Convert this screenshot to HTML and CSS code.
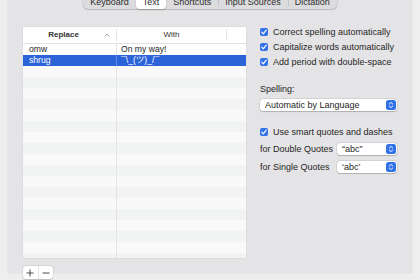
FILE: index.html
```html
<!DOCTYPE html>
<html>
<head>
<meta charset="utf-8">
<link rel="stylesheet" href="styles.css">
</head>
<body>
<div class="panel">
  <div class="tabs">
    <div class="tab">Keyboard</div>
    <div class="tab selected">Text</div>
    <div class="tab">Shortcuts</div>
    <div class="tab sep">Input Sources</div>
    <div class="tab sep">Dictation</div>
  </div>
  <div class="content">
    <div class="left">
      <div class="table">
        <div class="row header">
          <div class="cell hcell"><span class="htext bold">Replace</span><svg class="caret" width="6" height="4" viewBox="0 0 6 4"><path d="M0.8 3.3 L3 1 L5.2 3.3" fill="none" stroke="#9a9a9a" stroke-width="0.9"/></svg></div>
          <div class="cell hcell"><span class="htext">With</span></div>
          <div class="cell last"></div>
        </div>
        <div class="row data even"><div class="cell c1">omw</div><div class="cell c2">On my way!</div><div class="cell last"></div></div>
        <div class="row data sel"><div class="cell c1">shrug</div><div class="cell c2">¯\_(ツ)_/¯</div><div class="cell last"></div></div>
        <div class="row empty"><div class="cell"></div><div class="cell"></div><div class="cell last"></div></div>
        <div class="row empty odd"><div class="cell"></div><div class="cell"></div><div class="cell last"></div></div>
        <div class="row empty"><div class="cell"></div><div class="cell"></div><div class="cell last"></div></div>
        <div class="row empty odd"><div class="cell"></div><div class="cell"></div><div class="cell last"></div></div>
        <div class="row empty"><div class="cell"></div><div class="cell"></div><div class="cell last"></div></div>
        <div class="row empty odd"><div class="cell"></div><div class="cell"></div><div class="cell last"></div></div>
        <div class="row empty"><div class="cell"></div><div class="cell"></div><div class="cell last"></div></div>
        <div class="row empty odd"><div class="cell"></div><div class="cell"></div><div class="cell last"></div></div>
        <div class="row empty"><div class="cell"></div><div class="cell"></div><div class="cell last"></div></div>
        <div class="row empty odd"><div class="cell"></div><div class="cell"></div><div class="cell last"></div></div>
        <div class="row empty"><div class="cell"></div><div class="cell"></div><div class="cell last"></div></div>
        <div class="row empty odd"><div class="cell"></div><div class="cell"></div><div class="cell last"></div></div>
        <div class="row empty"><div class="cell"></div><div class="cell"></div><div class="cell last"></div></div>
        <div class="row empty odd"><div class="cell"></div><div class="cell"></div><div class="cell last"></div></div>
        <div class="row empty"><div class="cell"></div><div class="cell"></div><div class="cell last"></div></div>
        <div class="row empty odd"><div class="cell"></div><div class="cell"></div><div class="cell last"></div></div>
        <div class="row empty"><div class="cell"></div><div class="cell"></div><div class="cell last"></div></div>
        <div class="row empty odd"><div class="cell"></div><div class="cell"></div><div class="cell last"></div></div>
      </div>
      <div class="pm">
        <div class="pmbtn">
          <svg width="8" height="8" viewBox="0 0 8 8"><path d="M4 0.5 V7.5 M0.5 4 H7.5" stroke="#4a4a4a" stroke-width="1"/></svg>
        </div>
        <div class="pmbtn">
          <svg width="8" height="8" viewBox="0 0 8 8"><path d="M0.5 4 H7.5" stroke="#4a4a4a" stroke-width="1"/></svg>
        </div>
      </div>
    </div>
    <div class="right">
      <div class="check"><span class="box"><svg width="8" height="8" viewBox="0 0 8 8"><path d="M1.8 4.2 L3.3 5.8 L6.2 2.2" fill="none" stroke="#fff" stroke-width="1.2" stroke-linecap="round" stroke-linejoin="round"/></svg></span>Correct spelling automatically</div>
      <div class="check"><span class="box"><svg width="8" height="8" viewBox="0 0 8 8"><path d="M1.8 4.2 L3.3 5.8 L6.2 2.2" fill="none" stroke="#fff" stroke-width="1.2" stroke-linecap="round" stroke-linejoin="round"/></svg></span>Capitalize words automatically</div>
      <div class="check"><span class="box"><svg width="8" height="8" viewBox="0 0 8 8"><path d="M1.8 4.2 L3.3 5.8 L6.2 2.2" fill="none" stroke="#fff" stroke-width="1.2" stroke-linecap="round" stroke-linejoin="round"/></svg></span>Add period with double-space</div>
      <div class="label">Spelling:</div>
      <div class="popup wide"><span class="ptext">Automatic by Language</span><span class="stepper"><svg width="10" height="10" viewBox="0 0 10 10"><path d="M3.3 4 L5 2.4 L6.7 4 M3.3 6 L5 7.6 L6.7 6" fill="none" stroke="#fff" stroke-width="0.9" stroke-linecap="round" stroke-linejoin="round"/></svg></span></div>
      <div class="check smart"><span class="box"><svg width="8" height="8" viewBox="0 0 8 8"><path d="M1.8 4.2 L3.3 5.8 L6.2 2.2" fill="none" stroke="#fff" stroke-width="1.2" stroke-linecap="round" stroke-linejoin="round"/></svg></span>Use smart quotes and dashes</div>
      <div class="qrow first"><span>for Double Quotes</span><div class="popup small"><span class="ptext">“abc”</span><span class="stepper"><svg width="10" height="10" viewBox="0 0 10 10"><path d="M3.3 4 L5 2.4 L6.7 4 M3.3 6 L5 7.6 L6.7 6" fill="none" stroke="#fff" stroke-width="0.9" stroke-linecap="round" stroke-linejoin="round"/></svg></span></div></div>
      <div class="qrow second"><span>for Single Quotes</span><div class="popup small"><span class="ptext">‘abc’</span><span class="stepper"><svg width="10" height="10" viewBox="0 0 10 10"><path d="M3.3 4 L5 2.4 L6.7 4 M3.3 6 L5 7.6 L6.7 6" fill="none" stroke="#fff" stroke-width="0.9" stroke-linecap="round" stroke-linejoin="round"/></svg></span></div></div>
    </div>
  </div>
</div>
</body>
</html>
```

FILE: styles.css
```css
html, body {
  margin: 0;
  padding: 0;
}
body {
  width: 420px;
  height: 280px;
  overflow: hidden;
  background: #efeeef;
  font-family: "Liberation Sans", "Noto Sans CJK JP", sans-serif;
  font-size: 9px;
  color: #262626;
}
.panel {
  margin: 2px 8px 0;
  height: 278px;
  box-sizing: border-box;
  background: #e4e3e5;
  border-radius: 5px 5px 0 0;
  box-shadow: 0 0 0 0.5px rgba(0,0,0,0.05);
  padding: 0 15px;
}
.tabs {
  display: flex;
  width: max-content;
  margin: -7px auto 0;
  height: 14px;
  background: #dcdbdd;
  border-radius: 5px;
  box-shadow: 0 0 0 0.5px rgba(0,0,0,0.14), 0 0.5px 1px rgba(0,0,0,0.12);
}
.tab {
  padding: 0 7px;
  line-height: 15px;
  height: 14px;
  color: #2e2e2e;
  position: relative;
}
.tab.sep::before {
  content: "";
  position: absolute;
  left: 0;
  top: 3px;
  bottom: 3px;
  width: 1px;
  background: #c6c5c7;
}
.tab.selected {
  background: #ffffff;
  border-radius: 4px;
  box-shadow: 0 0.5px 1.5px rgba(0,0,0,0.2);
}
.content {
  display: flex;
  gap: 14px;
  margin-top: 15px;
}
.left {
  width: 223px;
}
.table {
  margin-top: 3px;
  height: 231px;
  overflow: hidden;
  background: #f9f9f9;
  box-shadow: 0 0 0 0.5px rgba(0,0,0,0.06);
}
.row {
  display: grid;
  grid-template-columns: 94px 110px 1fr;
  height: 11px;
}
.cell {
  line-height: 11px;
  white-space: nowrap;
  overflow: hidden;
  font-size: 8.6px;
}
.cell:first-child {
  border-right: 1px solid #e4e4e4;
}
.row.header {
  height: 17px;
  background: #ffffff;
  border-bottom: 1px solid #e2e2e2;
  box-sizing: border-box;
}
.hcell {
  display: flex;
  align-items: center;
  line-height: 16px;
  margin: 2px 0;
}
.header .hcell {
  border-right: 1px solid #e6e6e6;
}
.hcell .htext {
  flex: 1;
  text-align: center;
  font-size: 8px;
  color: #333;
  line-height: 12px;
}
.htext.bold {
  font-weight: bold;
}
.caret {
  margin-right: 6px;
}
.row.data {
  background: #ffffff;
}
.c1 {
  padding-left: 6px;
}
.c2 {
  padding-left: 4px;
}
.row.sel {
  background: #2d63d9;
  color: #ffffff;
}
.row.sel .cell:first-child {
  border-right-color: rgba(255,255,255,0.25);
}
.row.empty {
  background: #f9f9f9;
}
.row.empty.odd {
  background: #f2f3f3;
}
.pm {
  display: flex;
  width: 30px;
  height: 13px;
  margin-top: 8px;
  background: #ffffff;
  border-radius: 3px;
  box-shadow: 0 0 0 0.5px rgba(0,0,0,0.12), 0 0.5px 1px rgba(0,0,0,0.15);
}
.pmbtn {
  flex: 1;
  display: flex;
  align-items: center;
  justify-content: center;
}
.pmbtn + .pmbtn {
  border-left: 1px solid #e2e2e2;
}
.right {
  width: 137px;
  display: flex;
  flex-direction: column;
}
.check {
  display: flex;
  align-items: center;
  gap: 5px;
  height: 15px;
  white-space: nowrap;
}
.box {
  width: 8px;
  height: 8px;
  border-radius: 2px;
  background: #3272e8;
  display: flex;
  flex-shrink: 0;
}
.label {
  margin-top: 14px;
  line-height: 12px;
}
.popup {
  display: flex;
  align-items: center;
  height: 12px;
  background: #ffffff;
  border-radius: 3px;
  box-shadow: 0 0 0 0.5px rgba(0,0,0,0.12), 0 0.5px 1px rgba(0,0,0,0.18);
  box-sizing: border-box;
}
.popup.wide {
  margin-top: 4px;
  width: 137px;
}
.popup.small {
  width: 60px;
}
.ptext {
  flex: 1;
  padding-left: 5px;
  line-height: 12px;
  white-space: nowrap;
}
.stepper {
  width: 10px;
  height: 10px;
  margin-right: 1px;
  border-radius: 2.5px;
  background: #3272e8;
  display: flex;
}
.check.smart {
  margin-top: 13px;
}
.qrow {
  display: flex;
  justify-content: space-between;
  align-items: center;
  height: 12px;
  white-space: nowrap;
}
.qrow.first {
  margin-top: 4px;
}
.qrow.second {
  margin-top: 6px;
}
```
